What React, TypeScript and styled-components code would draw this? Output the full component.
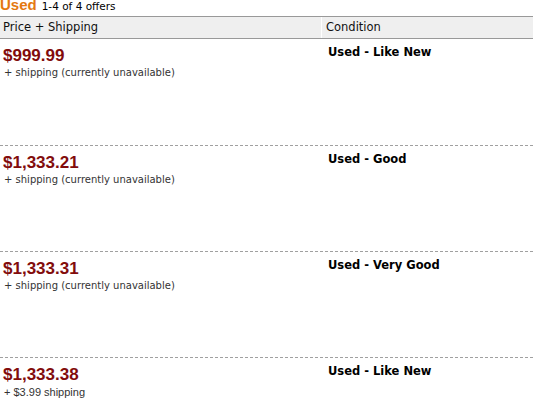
import styled, { createGlobalStyle } from "styled-components";

type Offer = {
  price: string;
  shipping: string;
  condition: string;
  plainShipping?: boolean;
};

const offers: Offer[] = [
  { price: "$999.99", shipping: "+ shipping (currently unavailable)", condition: "Used - Like New" },
  { price: "$1,333.21", shipping: "+ shipping (currently unavailable)", condition: "Used - Good" },
  { price: "$1,333.31", shipping: "+ shipping (currently unavailable)", condition: "Used - Very Good" },
  { price: "$1,333.38", shipping: "+ $3.99 shipping", condition: "Used - Like New", plainShipping: true },
];

const GlobalStyle = createGlobalStyle`
  html, body {
    margin: 0;
    padding: 0;
    background: #fff;
    overflow: hidden;
  }
  body {
    font-family: "DejaVu Sans", Verdana, sans-serif;
    color: #000;
  }
`;

export default function App() {
  return (
    <>
      <GlobalStyle />
      <Page>
        <Title>
          <TitleWord>Used</TitleWord>
          <TitleCount>1-4 of 4 offers</TitleCount>
        </Title>
        <HeaderRow>
          <HeaderCell>Price + Shipping</HeaderCell>
          <HeaderCell $divider>Condition</HeaderCell>
        </HeaderRow>
        {offers.map((o, i) => (
          <OfferRow key={o.price} $first={i === 0}>
            <PriceCell>
              <Price>{o.price}</Price>
              <Shipping $plain={o.plainShipping}>{o.shipping}</Shipping>
            </PriceCell>
            <ConditionCell>{o.condition}</ConditionCell>
          </OfferRow>
        ))}
      </Page>
    </>
  );
}

const Page = styled.div`
  width: 533px;
  display: flex;
  flex-direction: column;
`;

const Title = styled.div`
  height: 19px;
  margin-top: -3px;
  display: flex;
  align-items: baseline;
  gap: 5px;
  line-height: 16px;
`;

const TitleWord = styled.span`
  font-family: "Liberation Sans", Arial, sans-serif;
  font-weight: bold;
  font-size: 15px;
  color: #e47911;
`;

const TitleCount = styled.span`
  font-size: 10.5px;
  color: #000;
`;

const HeaderRow = styled.div`
  display: grid;
  grid-template-columns: 321px 1fr;
  height: 21px;
  background: #efefef;
  border-top: 1px solid #999;
  border-bottom: 1px solid #999;
`;

const HeaderCell = styled.div<{ $divider?: boolean }>`
  font-size: 11.5px;
  line-height: 21px;
  padding-left: ${(p) => (p.$divider ? "4px" : "3px")};
  color: #111;
  border-left: ${(p) => (p.$divider ? "1px solid #fff" : "none")};
`;

const OfferRow = styled.div<{ $first?: boolean }>`
  display: grid;
  grid-template-columns: 321px 1fr;
  height: 106px;
  box-sizing: border-box;
  border-top: ${(p) => (p.$first ? "none" : "1px dashed #a0a0a0")};
`;

const PriceCell = styled.div`
  padding: 7px 0 0 3px;
  display: flex;
  flex-direction: column;
`;

const Price = styled.div`
  font-family: "Liberation Sans", Arial, sans-serif;
  font-weight: bold;
  font-size: 17px;
  line-height: 20px;
  color: #820c0c;
`;

const Shipping = styled.div<{ $plain?: boolean }>`
  font-family: ${(p) =>
    p.$plain ? `"Liberation Sans", Arial, sans-serif` : `"DejaVu Sans", Verdana, sans-serif`};
  font-size: ${(p) => (p.$plain ? "11px" : "10px")};
  line-height: 14px;
  padding-left: 1px;
  color: #333;
`;

const ConditionCell = styled.div`
  padding: 6px 0 0 7px;
  font-weight: bold;
  font-size: 11.5px;
  line-height: 14px;
  color: #000;
`;
